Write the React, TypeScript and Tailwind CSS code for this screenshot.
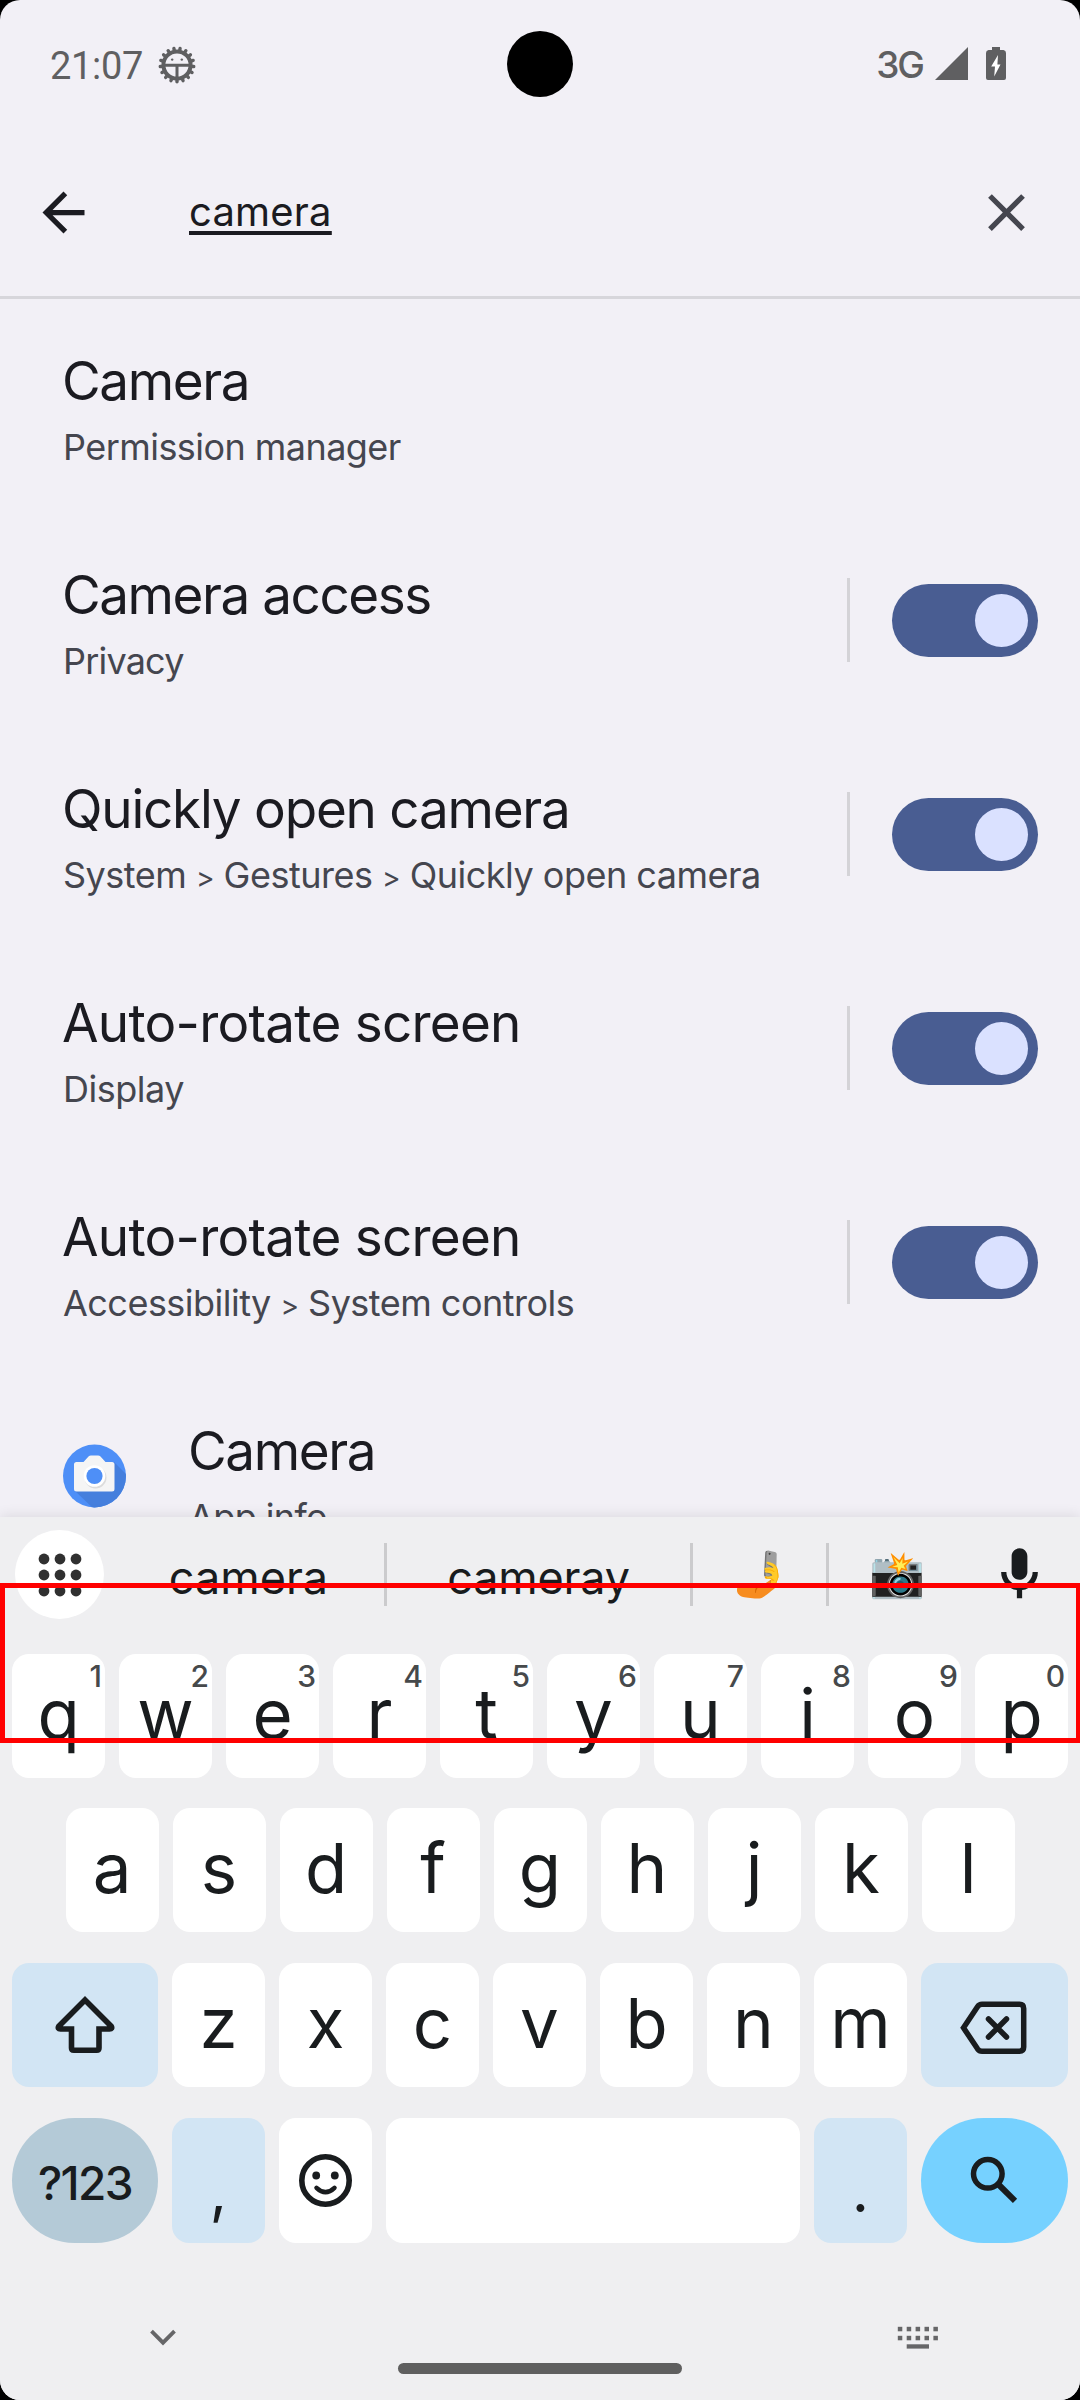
import { Fragment, type ReactNode } from "react";

function DebugIcon() {
  const teeth = Array.from({ length: 17 }, (_, i) => Math.PI / 2 + (i * 2 * Math.PI) / 17);
  return (
    <svg className="h-[38px] w-[38px]" viewBox="-19 -19 38 38" fill="none" stroke="#5f5f61">
      <circle r="13.6" strokeWidth="4" />
      {teeth.map((a) => (
        <line
          key={a}
          x1={Math.cos(a) * 14.5}
          y1={Math.sin(a) * 14.5}
          x2={Math.cos(a) * 16.8}
          y2={Math.sin(a) * 16.8}
          strokeWidth="3.4"
          strokeLinecap="round"
        />
      ))}
      <path d="M-13 0.3H13M0 0V14" strokeWidth="3" />
      <circle cx="-4.8" cy="-5.4" r="1.2" fill="#5f5f61" stroke="none" />
      <circle cx="4.8" cy="-5.4" r="1.2" fill="#5f5f61" stroke="none" />
    </svg>
  );
}

function StatusBar() {
  return (
    <div className="flex h-[128px] items-start pl-[50px] text-[#5f5f61]">
      <span className="mt-[47px] w-[96px] font-['Roboto'] text-[38px] leading-[38px] tracking-[-0.3px]">21:07</span>
      <div className="mt-[46px] ml-[12px]">
        <DebugIcon />
      </div>
      <span className="mt-[46px] ml-auto text-[37px] leading-[37px] font-medium tracking-[-2px]">3G</span>
      <svg className="mt-[47px] ml-[12px] h-[33px] w-[33px]" viewBox="0 0 33 33">
        <path d="M0 33L33 0V33Z" fill="#5f5f61" />
      </svg>
      <svg className="mt-[47px] mr-[74px] ml-[18px] h-[33px] w-[20px]" viewBox="0 0 20 33">
        <path d="M6 0H14V3H17.5Q20 3.5 20 6V31Q20 33 18 33H2Q0 33 0 31V6Q0 3.5 2.500 3H6Z" fill="#5f5f61" />
        <path d="M12 8L5.200 19.500H9L8.200 29.500L14.500 17.500H11.400Z" fill="#fff" />
      </svg>
    </div>
  );
}

function SearchBar() {
  return (
    <div className="flex h-[171px] items-center border-b-[3px] border-[#d7d6db] pl-[32px]">
      <svg className="h-[63px] w-[63px]" viewBox="0 0 24 24" fill="#1b1b21">
        <path d="M20 11H7.830l5.590-5.590L12 4l-8 8 8 8 1.410-1.410L7.830 13H20v-2z" />
      </svg>
      <span className="ml-[94px] text-[40px] leading-[48px] tracking-[0.2px] text-[#1b1b21] underline decoration-[3.5px] underline-offset-[5px]">
        camera
      </span>
      <svg className="mt-px mr-[42px] ml-auto h-[63px] w-[63px]" viewBox="0 0 24 24" fill="#45464f">
        <path d="M19 6.410L17.590 5 12 10.590 6.410 5 5 6.410 10.590 12 5 17.590 6.410 19 12 13.410 17.590 19 19 17.590 13.410 12z" />
      </svg>
    </div>
  );
}

function Toggle() {
  return (
    <div className="flex items-center">
      <div className="h-[84px] w-[3px] bg-[#d4d3d7]" />
      <div className="mr-[42px] ml-[42px] flex h-[73px] w-[146px] items-center justify-end rounded-full bg-[#495d92] pr-[10px]">
        <div className="h-[53px] w-[53px] rounded-full bg-[#dae1ff]" />
      </div>
    </div>
  );
}

function CameraAppIcon() {
  return (
    <svg className="h-[64px] w-[63px]" viewBox="0 0 63 64">
      <defs>
        <clipPath id="disc">
          <circle cx="31.500" cy="32" r="31.500" />
        </clipPath>
      </defs>
      <g clipPath="url(#disc)">
        <rect width="63" height="64" fill="#4e8ff7" />
        <path d="M51 18L66 33V66H32L12 47Z" fill="#457fdd" />
        <path
          d="M13.500 18H20.500L25.500 12.500Q26.500 11.500 28 11.500H35Q36.500 11.500 37.500 12.500L42.500 18H49Q51.500 18 51.500 20.500V45Q51.500 47.500 49 47.500H13.500Q11 47.500 11 45V20.500Q11 18 13.500 18Z"
          fill="#f5f5f5"
        />
        <circle cx="32.500" cy="33.500" r="11" fill="#dcdcdc" />
        <circle cx="31.500" cy="32" r="10.800" fill="#fff" />
        <circle cx="31.500" cy="32" r="8.100" fill="#4e8ff7" />
      </g>
    </svg>
  );
}

type RowProps = {
  title: string;
  path: string[];
  titleTracking: string;
  subTracking: string;
  toggle?: boolean;
  icon?: ReactNode;
};

const ROWS: RowProps[] = [
  { title: "Camera", path: ["Permission manager"], titleTracking: "tracking-[-1.4px]", subTracking: "tracking-[-0.55px]" },
  { title: "Camera access", path: ["Privacy"], titleTracking: "tracking-[-1.45px]", subTracking: "tracking-[-0.8px]", toggle: true },
  {
    title: "Quickly open camera",
    path: ["System", "Gestures", "Quickly open camera"],
    titleTracking: "tracking-[-1.22px]",
    subTracking: "tracking-[-0.5px]",
    toggle: true,
  },
  { title: "Auto-rotate screen", path: ["Display"], titleTracking: "tracking-[-0.75px]", subTracking: "tracking-[-0.5px]", toggle: true },
  {
    title: "Auto-rotate screen",
    path: ["Accessibility", "System controls"],
    titleTracking: "tracking-[-0.75px]",
    subTracking: "tracking-[-0.52px]",
    toggle: true,
  },
  { title: "Camera", path: ["App info"], titleTracking: "tracking-[-1.4px]", subTracking: "tracking-[-0.6px]", icon: <CameraAppIcon /> },
];

function Row({ title, path, titleTracking, subTracking, toggle, icon }: RowProps) {
  return (
    <div className="flex h-[214px] shrink-0 items-center pl-[63px]">
      {icon && <div className="w-[126px]">{icon}</div>}
      <div className="flex flex-1 flex-col gap-[10px] pt-[8px] whitespace-nowrap">
        <div className={`-ml-px text-[53px] leading-[64px] text-[#1b1b21] ${titleTracking}`}>{title}</div>
        <div className={`h-[48px] text-[36px] leading-[48px] text-[#45464f] ${subTracking}`}>
          {path.map((p, i) => (
            <Fragment key={p}>
              {i > 0 && (
                <>
                  {" "}
                  <span className="text-[28px] leading-none">&gt;</span>{" "}
                </>
              )}
              {p}
            </Fragment>
          ))}
        </div>
      </div>
      {toggle && <Toggle />}
    </div>
  );
}

function Divider() {
  return <div className="h-[63px] w-[3px] bg-[#cbcbcd]" />;
}

function SuggestionStrip() {
  return (
    <div className="flex h-[115px] items-center pl-[15px] text-[45px] leading-[54px] text-[#191c1e]">
      <div className="flex h-[89px] w-[89px] items-center justify-center rounded-full bg-white">
        <svg className="h-[44px] w-[44px]" viewBox="0 0 44 44" fill="#303030">
          {[6, 22, 38].map((y) => [6, 22, 38].map((x) => <circle key={`${x}-${y}`} cx={x} cy={y} r="5.400" />))}
        </svg>
      </div>
      <div className="w-[280px] pt-[6px] pl-[9px] text-center">camera</div>
      <Divider />
      <div className="w-[303px] pt-[6px] text-center tracking-[-0.2px]">cameray</div>
      <Divider />
      <div className="w-[133px] pl-px text-center font-['Noto_Color_Emoji']">🤳</div>
      <Divider />
      <div className="w-[136px] text-center font-['Noto_Color_Emoji']">📸</div>
      <svg className="ml-[23px] h-[63px] w-[63px]" viewBox="0 0 24 24" fill="#191c1e">
        <path d="M12 14c1.660 0 3-1.340 3-3V5c0-1.660-1.340-3-3-3S9 3.340 9 5v6c0 1.660 1.340 3 3 3zm5-3c0 2.760-2.240 5-5 5s-5-2.240-5-5H5c0 3.530 2.610 6.430 6 6.920V21h2v-3.080c3.390-.490 6-3.390 6-6.920h-2z" />
      </svg>
    </div>
  );
}

function Letter({ ch, hint }: { ch: string; hint?: string }) {
  return (
    <div className="relative h-[124px] w-[93px] rounded-[17px] bg-white text-center text-[69px] leading-[120px] text-[#191c1e]">
      {ch}
      {hint && <span className="absolute top-[7px] right-[3px] text-[30px] leading-[30px] font-medium text-[#46494b]">{hint}</span>}
    </div>
  );
}

function Keyboard() {
  return (
    <div className="relative h-[883px] bg-[#efeff1] shadow-[0_-2px_12px_rgba(0,0,0,0.09)]">
      <SuggestionStrip />
      <div className="mt-[22px] flex gap-[14px] pl-[12px]">
        {"qwertyuiop".split("").map((c, i) => (
          <Letter key={c} ch={c} hint={String((i + 1) % 10)} />
        ))}
      </div>
      <div className="mt-[30px] flex gap-[14px] pl-[65.5px]">
        {"asdfghjkl".split("").map((c) => (
          <Letter key={c} ch={c} />
        ))}
      </div>
      <div className="mt-[31px] flex gap-[14px] pl-[12px]">
        <div className="h-[124px] w-[146px] rounded-[17px] bg-[#d2e5f4]">
          <svg className="h-[124px] w-[146px]" viewBox="0 0 146 124" fill="none" stroke="#191c1e" strokeWidth="5.600">
            <path d="M73 37L46.800 63.200Q45.200 66 48.500 66H59.500V85Q59.500 87.300 61.800 87.300H84.700Q87 87.300 87 85V66H97.500Q100.800 66 99.200 63.200Z" />
          </svg>
        </div>
        {"zxcvbnm".split("").map((c) => (
          <Letter key={c} ch={c} />
        ))}
        <div className="h-[124px] w-[147px] rounded-[17px] bg-[#d2e5f4]">
          <svg
            className="h-[124px] w-[147px]"
            viewBox="0 0 147 124"
            fill="none"
            stroke="#191c1e"
            strokeWidth="5.500"
            strokeLinecap="round"
          >
            <path d="M42.500 64.800L56.500 43.800Q58.200 41.300 61 41.300H98.500Q102.700 41.300 102.700 45.500V84Q102.700 88.200 98.500 88.200H61Q58.200 88.200 56.500 85.800Z" />
            <path d="M67.500 56L85.500 74M85.500 56L67.500 74" />
          </svg>
        </div>
      </div>
      <div className="mt-[31px] flex gap-[14px] pl-[12px] text-center text-[#191c1e]">
        <div className="h-[125px] w-[146px] rounded-full bg-[#b4cad7] text-[46px] leading-[131px] font-medium tracking-[-1.6px]">?123</div>
        <div className="h-[125px] w-[93px] rounded-[17px] bg-[#d2e5f4] text-[60px] leading-[144px]">,</div>
        <div className="h-[125px] w-[93px] rounded-[17px] bg-white">
          <svg className="h-[125px] w-[93px]" viewBox="0 0 93 125" fill="none" stroke="#191c1e" strokeWidth="5.600">
            <circle cx="46.500" cy="62.500" r="23.700" />
            <circle cx="37.200" cy="57.500" r="3.900" fill="#191c1e" stroke="none" />
            <circle cx="55.800" cy="57.500" r="3.900" fill="#191c1e" stroke="none" />
            <path d="M37.500 69.800Q46.500 78.500 55.500 69.800" strokeWidth="4.500" strokeLinecap="round" />
          </svg>
        </div>
        <div className="h-[125px] w-[414px] rounded-[17px] bg-white" />
        <div className="h-[125px] w-[93px] rounded-[17px] bg-[#d2e5f4] text-[60px] leading-[144px]">.</div>
        <div className="h-[125px] w-[147px] rounded-full bg-[#76d1ff]">
          <svg className="h-[125px] w-[147px]" viewBox="0 0 147 125" fill="none" stroke="#191c1e" strokeWidth="5.500">
            <circle cx="66.800" cy="55.800" r="14.300" />
            <path d="M77.500 66.500L94 82.800" strokeWidth="6" />
          </svg>
        </div>
      </div>
      <div className="flex h-[157px] items-start">
        <svg className="mt-[85px] ml-[149px] h-[20px] w-[28px]" viewBox="0 0 28 20" fill="none" stroke="#666668" strokeWidth="3.800">
          <path d="M2.500 3.200L14 14.700L25.500 3.200" />
        </svg>
        <div className="mt-[120px] ml-[221px] h-[11px] w-[284px] rounded-full bg-[#5f5f5f]" />
        <svg className="mt-[83px] ml-[215px] h-[24px] w-[42px]" viewBox="0 0 42 24" fill="#666668">
          {[0.8, 9.8].map((y) => [0.8, 9.7, 18.6, 27.5, 36.4].map((x) => <rect key={`${x}-${y}`} x={x} y={y} width="4.500" height="4.500" />))}
          <rect x="9.700" y="18.300" width="22.300" height="4.300" />
        </svg>
      </div>
    </div>
  );
}

export default function App() {
  return (
    <div className="h-[2400px] w-[1080px] overflow-hidden bg-black font-['Inter',sans-serif]">
      <div className="relative flex h-full flex-col overflow-hidden rounded-[20px] bg-[#f2f0f6]">
        <StatusBar />
        <SearchBar />
        <div className="flex h-[1218px] flex-col overflow-hidden">
          {ROWS.map((r, i) => (
            <Row key={i} {...r} />
          ))}
        </div>
        <Keyboard />
        <div className="absolute top-[31px] left-[507px] h-[66px] w-[66px] rounded-full bg-black" />
        <div className="absolute top-[1583px] -right-px left-0 h-[160px] border-[5px] border-[#ff0000]" />
      </div>
    </div>
  );
}
